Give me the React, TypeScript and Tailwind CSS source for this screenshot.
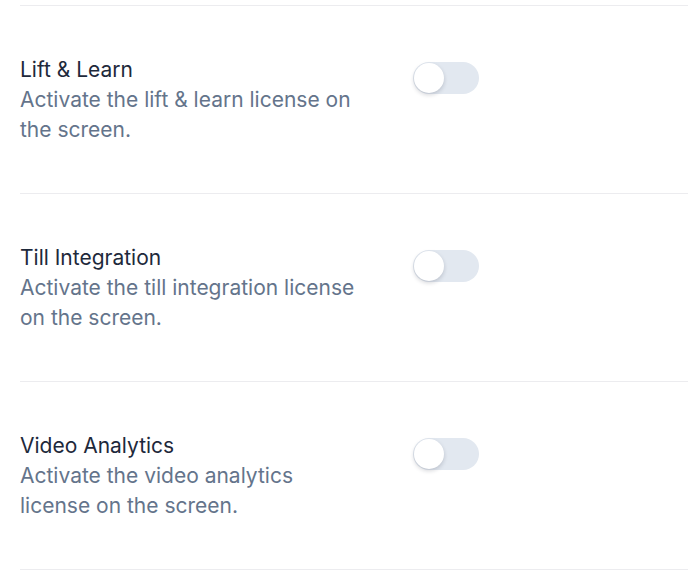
import React, { useState } from "react";

const licenses = [
  {
    title: "Lift & Learn",
    description: "Activate the lift & learn license on the screen.",
  },
  {
    title: "Till Integration",
    description: "Activate the till integration license on the screen.",
  },
  {
    title: "Video Analytics",
    description: "Activate the video analytics license on the screen.",
  },
];

function Toggle({ on, onClick }: { on: boolean; onClick: () => void }) {
  return (
    <button
      onClick={onClick}
      className={`mt-[7px] flex h-[32px] w-[66px] shrink-0 items-center rounded-full p-px ${
        on ? "bg-slate-700" : "bg-[#e2e8f0]"
      }`}
    >
      <span
        className={`h-[30px] w-[30px] rounded-full bg-white shadow-[0_2px_4px_rgba(15,23,42,0.18)] transition-transform ${
          on ? "translate-x-[34px]" : "translate-x-0"
        }`}
      />
    </button>
  );
}

export default function App() {
  const [enabled, setEnabled] = useState<boolean[]>([false, false, false]);

  return (
    <div
      className="min-h-[572px] w-[688px] overflow-hidden bg-white pt-[5px] pl-5"
      style={{ fontFamily: "Inter, 'Noto Sans', sans-serif" }}
    >
      <div className="border-t border-[#ececef]">
        {licenses.map((item, i) => (
          <div
            key={item.title}
            className="flex items-start border-b border-[#ececef] pt-[49px] pb-[48px]"
          >
            <div className="w-[342px]">
              <h3 className="text-[21px] leading-[30px] font-normal text-[#1e293b]">
                {item.title}
              </h3>
              <p className="text-[21px] leading-[30px] text-[#64748b]">
                {item.description}
              </p>
            </div>
            <div className="ml-[51px]">
              <Toggle
                on={enabled[i]}
                onClick={() =>
                  setEnabled((prev) => prev.map((v, j) => (j === i ? !v : v)))
                }
              />
            </div>
          </div>
        ))}
      </div>
    </div>
  );
}
